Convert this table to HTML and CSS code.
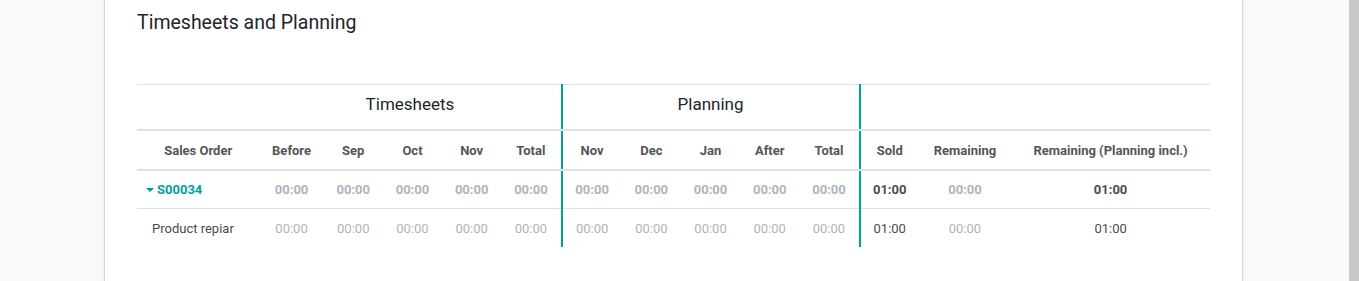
FILE: index.html
```html
<!DOCTYPE html>
<html lang="en">
<head>
<meta charset="utf-8">
<title>Timesheets and Planning</title>
<link rel="stylesheet" href="styles.css">
</head>
<body>
<div class="page">
  <div class="gutter-left"></div>
  <main class="sheet">
    <h2 class="title">Timesheets and Planning</h2>
    <table class="grid">
      <colgroup>
        <col class="c-so">
        <col class="c-before">
        <col class="c-m"><col class="c-m"><col class="c-m"><col class="c-total">
        <col class="c-total"><col class="c-m"><col class="c-m"><col class="c-m"><col class="c-total">
        <col class="c-sold"><col class="c-rem"><col class="c-remp">
      </colgroup>
      <thead>
        <tr class="groups">
          <th></th>
          <th colspan="5">Timesheets</th>
          <th colspan="5" class="sep">Planning</th>
          <th colspan="3" class="sep"></th>
        </tr>
        <tr class="cols">
          <th>Sales Order</th>
          <th>Before</th>
          <th>Sep</th>
          <th>Oct</th>
          <th>Nov</th>
          <th>Total</th>
          <th class="sep">Nov</th>
          <th>Dec</th>
          <th>Jan</th>
          <th>After</th>
          <th>Total</th>
          <th class="sep">Sold</th>
          <th>Remaining</th>
          <th>Remaining (Planning incl.)</th>
        </tr>
      </thead>
      <tbody>
        <tr class="order">
          <td class="name"><span class="caret"></span>S00034</td>
          <td class="muted">00:00</td>
          <td class="muted">00:00</td>
          <td class="muted">00:00</td>
          <td class="muted">00:00</td>
          <td class="muted">00:00</td>
          <td class="muted sep">00:00</td>
          <td class="muted">00:00</td>
          <td class="muted">00:00</td>
          <td class="muted">00:00</td>
          <td class="muted">00:00</td>
          <td class="sep">01:00</td>
          <td class="muted">00:00</td>
          <td>01:00</td>
        </tr>
        <tr class="line">
          <td class="name">Product repiar</td>
          <td class="muted">00:00</td>
          <td class="muted">00:00</td>
          <td class="muted">00:00</td>
          <td class="muted">00:00</td>
          <td class="muted">00:00</td>
          <td class="muted sep">00:00</td>
          <td class="muted">00:00</td>
          <td class="muted">00:00</td>
          <td class="muted">00:00</td>
          <td class="muted">00:00</td>
          <td class="sep">01:00</td>
          <td class="muted">00:00</td>
          <td>01:00</td>
        </tr>
      </tbody>
    </table>
  </main>
  <div class="gutter-right"></div>
  <div class="scrollbar"></div>
</div>
</body>
</html>
```

FILE: styles.css
```css
html, body {
  margin: 0;
  padding: 0;
  height: 100%;
  overflow: hidden;
}
body {
  background: #f9f9f9;
  font-family: Roboto, "Noto Sans", sans-serif;
  color: #4c4c4c;
}
.page {
  display: flex;
  height: 281px;
}
.gutter-left {
  width: 104px;
  flex: none;
}
.sheet {
  flex: none;
  background: #ffffff;
  border-left: 1px solid #d8d8d8;
  border-right: 1px solid #d8d8d8;
  box-shadow: 0 0 4px rgba(0,0,0,0.08);
  padding: 0 32px;
  box-sizing: content-box;
  width: 1073px;
}
.gutter-right {
  flex: 1;
}
.scrollbar {
  width: 10px;
  flex: none;
  background: #c8c8c8;
}
.title {
  margin: 0;
  padding-top: 10px;
  height: 84px;
  box-sizing: border-box;
  font-size: 19.5px;
  font-weight: 400;
  line-height: 25px;
  color: #212529;
}
.grid {
  width: 1073px;
  table-layout: fixed;
  border-collapse: collapse;
  border-top: 1px solid #dee2e6;
  font-size: 13px;
}
.c-so { width: 122px; }
.c-before { width: 64px; }
.c-m { width: 59px; }
.c-total { width: 60px; }
.c-sold { width: 59px; }
.c-rem { width: 92px; }
.c-remp { width: 198px; }

.grid th, .grid td {
  padding: 0;
  text-align: center;
  white-space: nowrap;
}
.grid .sep {
  border-left: 2px solid #00a09d;
}
.groups th {
  height: 38px;
  padding-bottom: 6px;
  font-size: 17px;
  font-weight: 400;
  color: #212529;
  border-bottom: 2px solid #dee2e6;
}
.cols th {
  height: 38px;
  font-weight: 700;
  color: #555555;
  border-bottom: 2px solid #dee2e6;
}
.grid td {
  height: 37px;
}
.grid .line td {
  height: 38px;
}
.order td {
  font-weight: 700;
  color: #4c4c4c;
  border-bottom: 1px solid #dee2e6;
}
.line td {
  color: #4c4c4c;
}
.grid td.muted {
  color: #adb5bd;
}
.order td.name {
  text-align: left;
  padding-left: 9px;
  color: #00a09d;
}
.caret {
  display: inline-block;
  width: 0;
  height: 0;
  border-left: 4px solid transparent;
  border-right: 4px solid transparent;
  border-top: 4px solid #00a09d;
  vertical-align: 2px;
  margin-right: 3px;
}
.line td.name {
  text-align: left;
  padding-left: 15px;
}
```
